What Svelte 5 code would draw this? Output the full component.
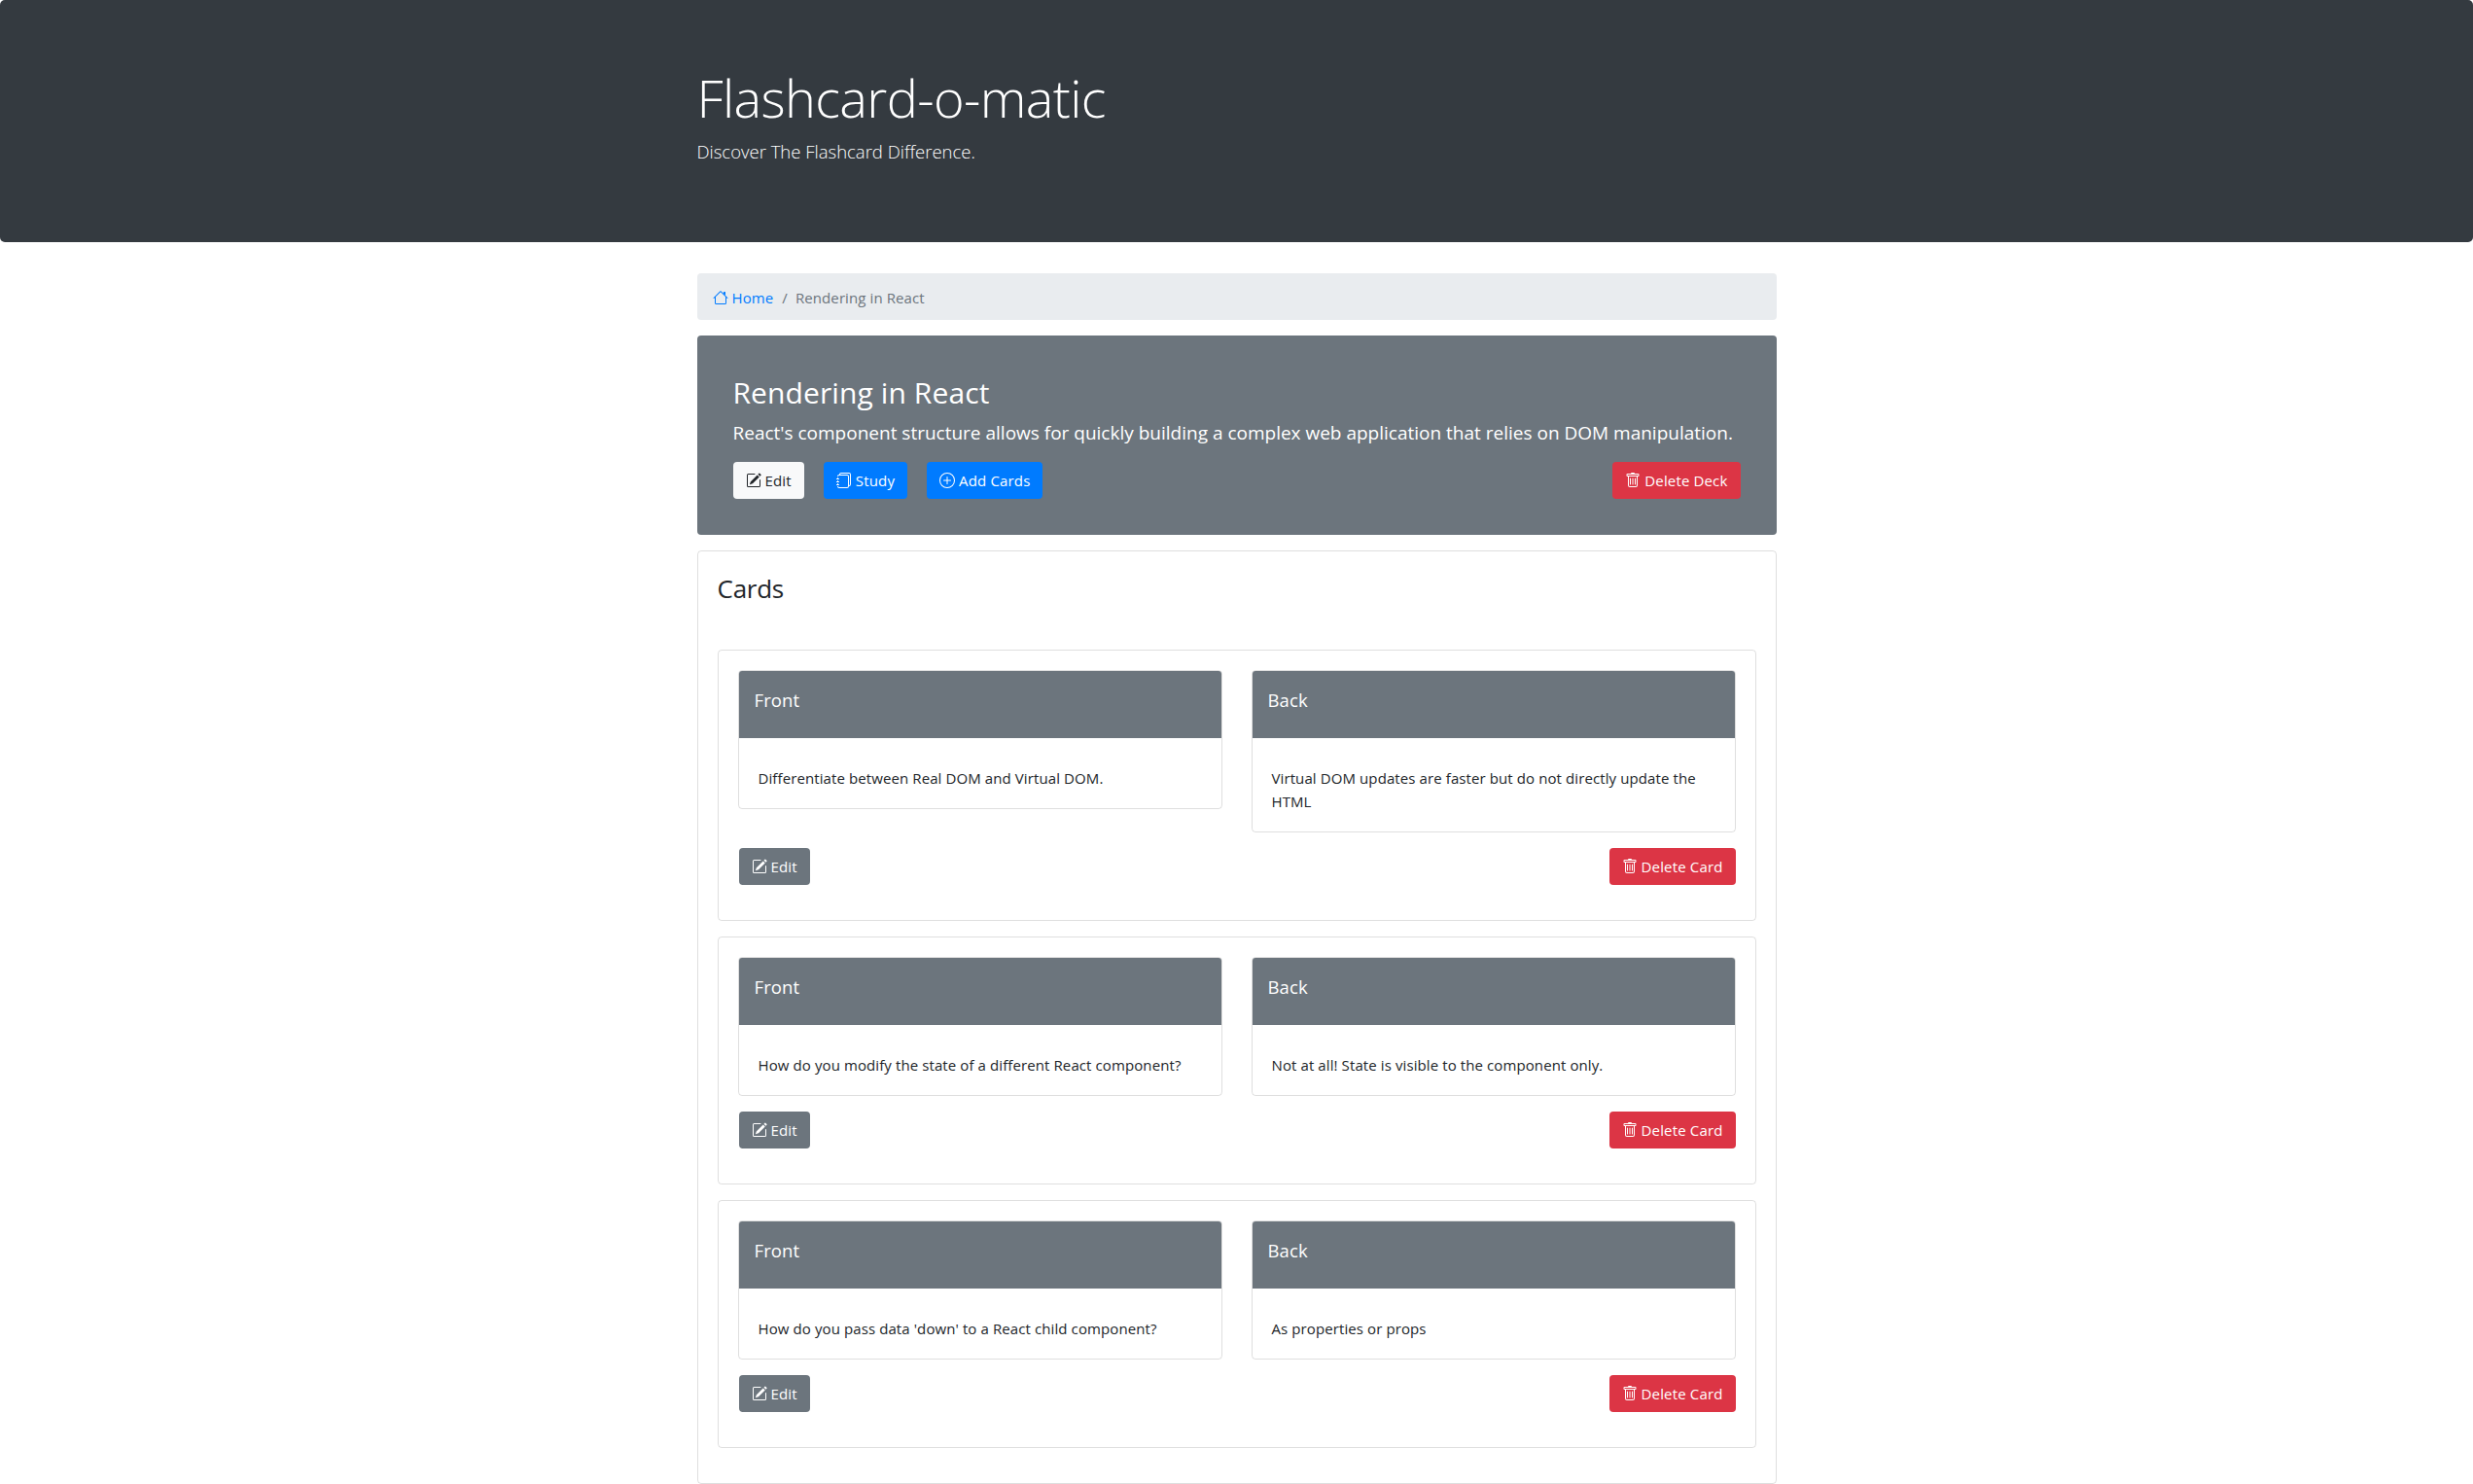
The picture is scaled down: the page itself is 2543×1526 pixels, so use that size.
<script>
	const cards = [
		{
			front: 'Differentiate between Real DOM and Virtual DOM.',
			back: 'Virtual DOM updates are faster but do not directly update the HTML'
		},
		{
			front: 'How do you modify the state of a different React component?',
			back: 'Not at all! State is visible to the component only.'
		},
		{
			front: "How do you pass data 'down' to a React child component?",
			back: 'As properties or props'
		}
	];
</script>

{#snippet editIcon()}
	<svg class="bi" viewBox="0 0 16 16" fill="currentColor">
		<path d="M15.502 1.94a.5.5 0 0 1 0 .706L14.459 3.69l-2-2L13.502.646a.5.5 0 0 1 .707 0l1.293 1.293zm-1.75 2.456-2-2L4.939 9.21a.5.5 0 0 0-.121.196l-.805 2.414a.25.25 0 0 0 .316.316l2.414-.805a.5.5 0 0 0 .196-.12l6.813-6.814z" />
		<path fill-rule="evenodd" d="M1 13.5A1.5 1.5 0 0 0 2.5 15h11a1.5 1.5 0 0 0 1.5-1.5v-6a.5.5 0 0 0-1 0v6a.5.5 0 0 1-.5.5h-11a.5.5 0 0 1-.5-.5v-11a.5.5 0 0 1 .5-.5H9a.5.5 0 0 0 0-1H2.5A1.5 1.5 0 0 0 1 2.5v11z" />
	</svg>
{/snippet}

{#snippet trashIcon()}
	<svg class="bi" viewBox="0 0 16 16" fill="currentColor">
		<path d="M5.5 5.5A.5.5 0 0 1 6 6v6a.5.5 0 0 1-1 0V6a.5.5 0 0 1 .5-.5zm2.5 0a.5.5 0 0 1 .5.5v6a.5.5 0 0 1-1 0V6a.5.5 0 0 1 .5-.5zm3 .5a.5.5 0 0 0-1 0v6a.5.5 0 0 0 1 0V6z" />
		<path fill-rule="evenodd" d="M14.5 3a1 1 0 0 1-1 1H13v9a2 2 0 0 1-2 2H5a2 2 0 0 1-2-2V4h-.5a1 1 0 0 1-1-1V2a1 1 0 0 1 1-1H6a1 1 0 0 1 1-1h2a1 1 0 0 1 1 1h3.5a1 1 0 0 1 1 1v1zM4.118 4 4 4.059V13a1 1 0 0 0 1 1h6a1 1 0 0 0 1-1V4.059L11.882 4H4.118zM2.5 3V2h11v1h-11z" />
	</svg>
{/snippet}

<header class="jumbotron">
	<div class="container">
		<h1>Flashcard-o-matic</h1>
		<p class="lead">Discover The Flashcard Difference.</p>
	</div>
</header>

<main class="container">
	<nav class="breadcrumb">
		<a href="#home">
			<svg class="bi" viewBox="0 0 16 16" fill="currentColor">
				<path fill-rule="evenodd" d="M2 13.5V7h1v6.5a.5.5 0 0 0 .5.5h9a.5.5 0 0 0 .5-.5V7h1v6.5a1.5 1.5 0 0 1-1.5 1.5h-9A1.5 1.5 0 0 1 2 13.5zm11-11V6l-2-2V2.5a.5.5 0 0 1 .5-.5h1a.5.5 0 0 1 .5.5z" />
				<path fill-rule="evenodd" d="M7.293 1.5a1 1 0 0 1 1.414 0l6.647 6.646a.5.5 0 0 1-.708.708L8 2.207 1.354 8.854a.5.5 0 1 1-.708-.708L7.293 1.5z" />
			</svg>
			Home</a>
		<span class="sep">/</span>
		<span class="active">Rendering in React</span>
	</nav>

	<section class="deck">
		<h2>Rendering in React</h2>
		<p class="deck-text">
			React's component structure allows for quickly building a complex web application that relies on DOM manipulation.
		</p>
		<div class="deck-actions">
			<button class="btn light">{@render editIcon()} Edit</button>
			<button class="btn primary">
				<svg class="bi" viewBox="0 0 16 16" fill="currentColor">
					<path d="M5 0h8a2 2 0 0 1 2 2v10a2 2 0 0 1-2 2 2 2 0 0 1-2 2H3a2 2 0 0 1-2-2h1a1 1 0 0 0 1 1h8a1 1 0 0 0 1-1V4a1 1 0 0 0-1-1H3a1 1 0 0 0-1 1H1a2 2 0 0 1 2-2h8a2 2 0 0 1 2 2v9a1 1 0 0 0 1-1V2a1 1 0 0 0-1-1H5a1 1 0 0 0-1 1H3a2 2 0 0 1 2-2z" />
					<path d="M1 6v-.5a.5.5 0 0 1 1 0V6h.5a.5.5 0 0 1 0 1h-2a.5.5 0 0 1 0-1H1zm0 3v-.5a.5.5 0 0 1 1 0V9h.5a.5.5 0 0 1 0 1h-2a.5.5 0 0 1 0-1H1zm0 2.5v.5H.5a.5.5 0 0 0 0 1h2a.5.5 0 0 0 0-1H2v-.5a.5.5 0 0 0-1 0z" />
				</svg>
				Study</button>
			<button class="btn primary">
				<svg class="bi" viewBox="0 0 16 16" fill="currentColor">
					<path d="M8 15A7 7 0 1 1 8 1a7 7 0 0 1 0 14zm0 1A8 8 0 1 0 8 0a8 8 0 0 0 0 16z" />
					<path d="M8 4a.5.5 0 0 1 .5.5v3h3a.5.5 0 0 1 0 1h-3v3a.5.5 0 0 1-1 0v-3h-3a.5.5 0 0 1 0-1h3v-3A.5.5 0 0 1 8 4z" />
				</svg>
				Add Cards</button>
			<button class="btn danger push">{@render trashIcon()} Delete Deck</button>
		</div>
	</section>

	<section class="card-list">
		<h3>Cards</h3>
		{#each cards as card}
			<article class="flashcard">
				<div class="sides">
					<div class="side">
						<div class="side-header">Front</div>
						<div class="side-body">{card.front}</div>
					</div>
					<div class="side">
						<div class="side-header">Back</div>
						<div class="side-body">{card.back}</div>
					</div>
				</div>
				<div class="card-actions">
					<button class="btn secondary">{@render editIcon()} Edit</button>
					<button class="btn danger">{@render trashIcon()} Delete Card</button>
				</div>
			</article>
		{/each}
	</section>
</main>

<style>
	:global(body) {
		margin: 0;
		background: #fff;
		color: #212529;
		font-family: 'Open Sans', 'Noto Sans', sans-serif;
		font-size: 15px;
		line-height: 24px;
		letter-spacing: 0.1px;
	}

	.container {
		width: 1110px;
		margin: 0 auto;
	}

	.jumbotron {
		height: 249px;
		box-sizing: border-box;
		padding-top: 67px;
		margin-bottom: 32px;
		background: #343a40;
		color: #fff;
		border-radius: 5px;
	}

	h1 {
		margin: 0 0 7px;
		font-size: 54px;
		font-weight: 300;
		line-height: 67px;
		letter-spacing: -0.63px;
	}

	.lead {
		margin: 0;
		font-size: 18.5px;
		font-weight: 300;
		line-height: 30px;
		letter-spacing: 0;
	}

	.breadcrumb {
		display: flex;
		align-items: center;
		height: 48px;
		box-sizing: border-box;
		padding: 1px 16px 0;
		margin-bottom: 16px;
		background: #e9ecef;
		border-radius: 4px;
	}

	.breadcrumb a {
		color: #007bff;
		text-decoration: none;
	}

	.sep {
		padding: 0 8px 0 9px;
		color: #6c757d;
	}

	.active {
		color: #6c757d;
	}

	.bi {
		width: 16px;
		height: 16px;
		vertical-align: -2px;
	}

	.deck {
		height: 205px;
		box-sizing: border-box;
		padding: 40px 37px 37px;
		margin-bottom: 16px;
		background: #6c757d;
		color: #fff;
		border-radius: 4px;
	}

	h2 {
		margin: 0 0 7px;
		font-size: 30px;
		font-weight: 400;
		line-height: 38px;
		letter-spacing: 0.1px;
	}

	.deck-text {
		margin: 0 0 15px;
		font-size: 19px;
		line-height: 30px;
		letter-spacing: 0;
	}

	.deck-actions {
		display: flex;
		gap: 20px;
	}

	.push {
		margin-left: auto;
	}

	.btn {
		height: 38px;
		box-sizing: border-box;
		padding: 0 12px;
		border: 1px solid transparent;
		border-radius: 4px;
		font: inherit;
		letter-spacing: 0.15px;
		white-space: nowrap;
	}

	.light {
		background: #f8f9fa;
		color: #212529;
	}

	.primary {
		background: #007bff;
		color: #fff;
	}

	.secondary {
		background: #6c757d;
		color: #fff;
	}

	.danger {
		background: #dc3545;
		color: #fff;
	}

	.card-list {
		box-sizing: border-box;
		padding: 20px;
		border: 1px solid rgba(0, 0, 0, 0.125);
		border-radius: 4px;
	}

	h3 {
		margin: 1px 0 46px;
		font-size: 26px;
		font-weight: 400;
		line-height: 34px;
		letter-spacing: -0.25px;
	}

	.flashcard {
		padding: 20px;
		margin-bottom: 16px;
		border: 1px solid rgba(0, 0, 0, 0.125);
		border-radius: 4px;
	}

	.sides {
		display: grid;
		grid-template-columns: 1fr 1fr;
		gap: 30px;
		align-items: start;
		margin-bottom: 16px;
	}

	.side {
		border: 1px solid rgba(0, 0, 0, 0.125);
		border-radius: 4px;
		overflow: hidden;
	}

	.side-header {
		height: 69px;
		box-sizing: border-box;
		padding: 15px 16px 0;
		background: #6c757d;
		color: #fff;
		font-size: 18.5px;
		line-height: 30px;
	}

	.side-body {
		padding: 29px 20px 19px;
	}

	.card-actions {
		display: flex;
		justify-content: space-between;
		padding-left: 1px;
		margin-bottom: 16px;
	}
</style>
